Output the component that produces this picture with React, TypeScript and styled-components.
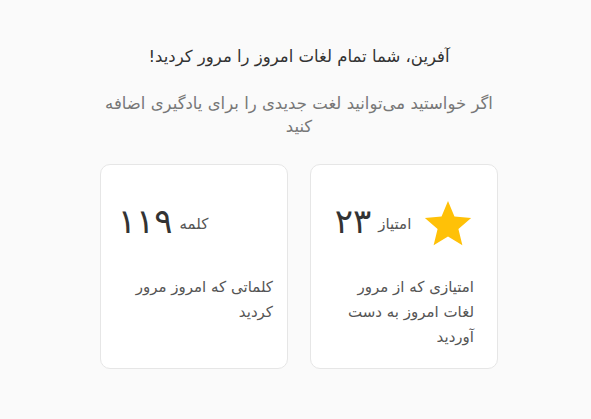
import styled, { createGlobalStyle } from "styled-components";

const GlobalStyle = createGlobalStyle`
  html, body {
    margin: 0;
    padding: 0;
    background: #fafafa;
  }
  body {
    font-family: "DejaVu Sans", "Noto Sans", sans-serif;
    direction: rtl;
  }
`;

const Page = styled.div`
  width: 591px;
  height: 419px;
  display: flex;
  justify-content: center;
  padding-left: 7px;
  box-sizing: border-box;
`;

const Wrapper = styled.div`
  width: 398px;
  padding-top: 44px;
  display: flex;
  flex-direction: column;
  align-items: center;
`;

const Title = styled.h2`
  margin: 0;
  font-size: 16.5px;
  font-weight: 500;
  color: #333;
  line-height: 26px;
  text-align: center;
`;

const Subtitle = styled.p`
  margin: 22px 0 0;
  font-size: 16.5px;
  line-height: 23px;
  color: #777;
  text-align: center;
`;

const Cards = styled.div`
  margin-top: 26px;
  width: 100%;
  display: grid;
  grid-template-columns: 1fr 1fr;
  gap: 22px;
`;

const Card = styled.div`
  height: 205px;
  box-sizing: border-box;
  background: #fff;
  border: 1px solid #e6e6e6;
  border-radius: 10px;
  padding-top: 34px;
  display: flex;
  flex-direction: column;
  align-items: center;
`;

const StatRow = styled.div`
  height: 50px;
  display: flex;
  align-items: center;
`;

const IconSlot = styled.div`
  width: 50px;
  height: 50px;
  margin-left: 12px;
  display: flex;
  align-items: center;
  justify-content: center;
`;

const Label = styled.span`
  font-size: 15px;
  color: #555;
  margin-left: 7px;
`;

const Value = styled.span`
  font-size: 34px;
  color: #333;
  line-height: 1;
  letter-spacing: -2px;
  margin-bottom: 6px;
`;

const Description = styled.p<{ $width: number }>`
  margin: 26px 0 0;
  width: ${(p) => p.$width}px;
  font-size: 15px;
  line-height: 25px;
  color: #555;
  text-align: right;
`;

const Star = () => (
  <svg width="50" height="48" viewBox="0 0 24 23">
    <path
      d="M12 0.5l3.1 7.4 8 .7-6.1 5.3 1.9 7.8L12 17.5l-6.9 4.2 1.9-7.8L.9 8.6l8-.7z"
      fill="#ffc107"
    />
  </svg>
);

export default function App() {
  return (
    <>
      <GlobalStyle />
      <Page>
        <Wrapper>
          <Title>آفرین، شما تمام لغات امروز را مرور کردید!</Title>
          <Subtitle>
            اگر خواستید می‌توانید لغت جدیدی را برای یادگیری اضافه کنید
          </Subtitle>
          <Cards>
            <Card>
              <StatRow>
                <IconSlot>
                  <Star />
                </IconSlot>
                <Label>امتیاز</Label>
                <Value>۲۳</Value>
              </StatRow>
              <Description $width={140}>
                امتیازی که از مرور لغات امروز به دست آوردید
              </Description>
            </Card>
            <Card>
              <StatRow>
                <IconSlot />
                <Label>کلمه</Label>
                <Value>۱۱۹</Value>
              </StatRow>
              <Description $width={158}>کلماتی که امروز مرور کردید</Description>
            </Card>
          </Cards>
        </Wrapper>
      </Page>
    </>
  );
}
